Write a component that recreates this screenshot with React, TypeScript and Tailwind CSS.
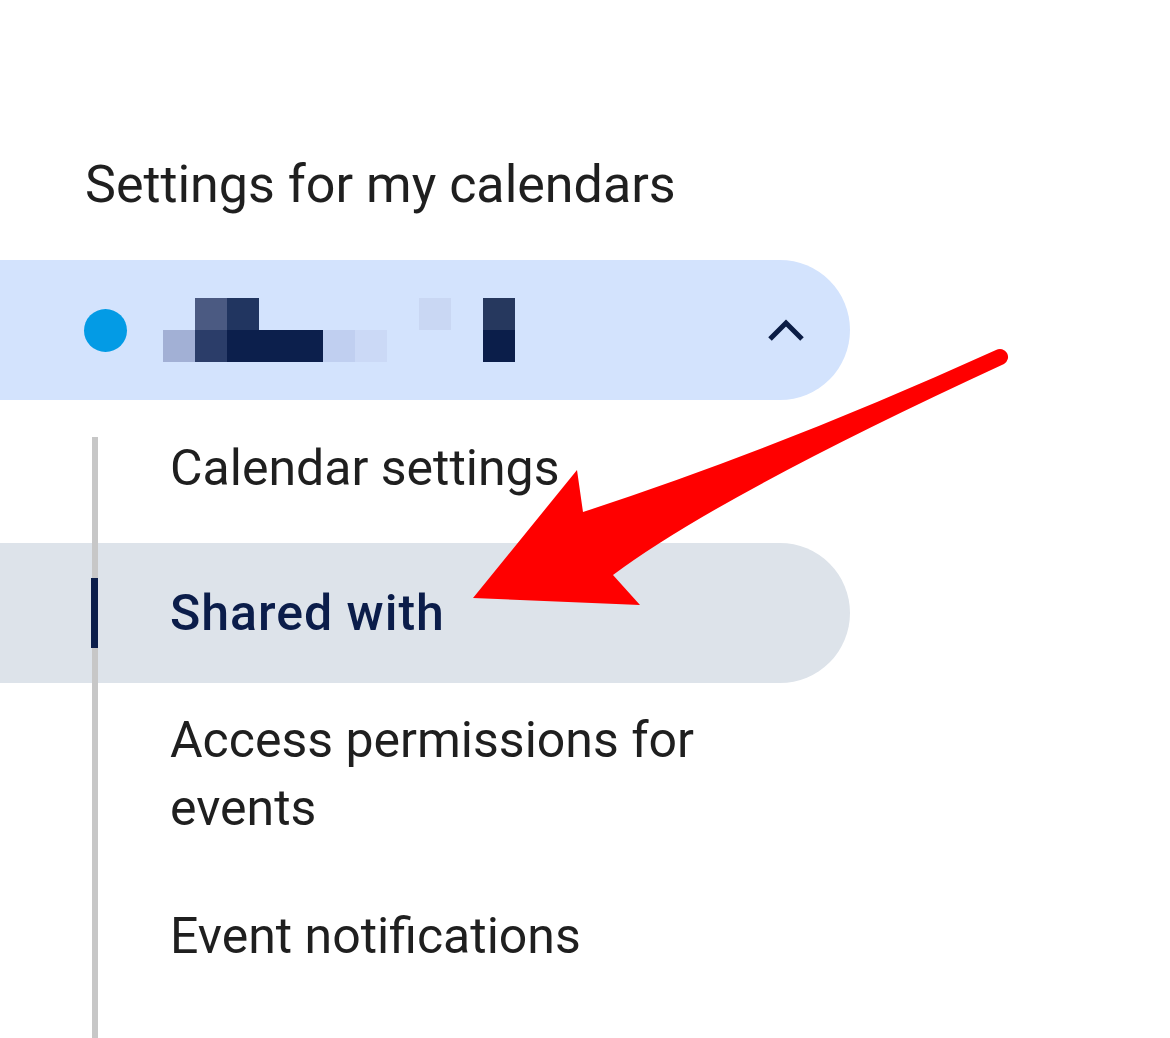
import React from "react";

// pixelated (redacted) calendar name, 2 rows x 11 cells
const nameCells: string[][] = [
  ["", "#4b5a82", "#213560", "", "", "", "", "", "#c9d7f3", "", "#26385e"],
  ["#a2b0d5", "#2b3d69", "#0c1f4c", "#0c1f4c", "#0c1f4c", "#c0cff0", "#cbd9f6", "", "", "", "#0b1e4a"],
];

const PixelName = () => {
  return (
    <div className="ml-[36px] flex flex-col">
      {nameCells.map((row, i) => (
        <div key={i} className="flex">
          {row.map((c, j) => (
            <div key={j} className="h-[32px] w-[32px]" style={{ backgroundColor: c || "transparent" }}></div>
          ))}
        </div>
      ))}
    </div>
  );
};

const Arrow = () => {
  return (
    <svg className="pointer-events-none absolute left-0 top-0" width="1170" height="1038" viewBox="0 0 1170 1038">
      <path
        d="M 996 350 Q 780 448 583 512 L 577 470 L 473 598 L 640 605 L 613 575 Q 720 495 1004 364 A 7 7 0 0 0 996 350 Z"
        fill="#ff0000"
      />
    </svg>
  );
};

export default function App() {
  return (
    <div className="relative h-[1038px] w-[1170px] overflow-hidden bg-white font-['Roboto',sans-serif] text-[#1f1f1f]">
      <h1 className="pl-[85px] pt-[154px] text-[52px] font-normal leading-[62px]">Settings for my calendars</h1>

      <div className="mt-[44px] flex h-[140px] w-[850px] items-center rounded-r-full bg-[#d3e3fd]">
        <div className="ml-[84px] h-[43px] w-[43px] rounded-full bg-[#039be5]"></div>
        <PixelName />
        <svg className="ml-auto mr-[44px]" width="40" height="26" viewBox="0 0 40 26">
          <path d="M4 22 L20 6 L36 22" fill="none" stroke="#0b1d45" strokeWidth="5" />
        </svg>
      </div>

      <div className="relative pb-[40px] text-[50px] leading-[68px]">
        <div className="absolute bottom-0 left-[92px] top-[37px] z-10 w-[6px] bg-[#c7c7c7]"></div>

        <div className="flex h-[143px] w-[850px] items-center pb-[7px] pl-[170px]">Calendar settings</div>

        <div className="relative flex h-[140px] w-[850px] items-center rounded-r-full bg-[#dde3ea] pl-[170px] font-medium tracking-[1px] text-[#0b1d4a]">
          <div className="absolute left-[91px] top-[35px] z-20 h-[70px] w-[7px] bg-[#0b1d4a]"></div>
          Shared with
        </div>

        <div className="w-[850px] pb-[24px] pl-[170px] pt-[23px]">
          Access permissions for
          <br />
          events
        </div>

        <div className="flex h-[140px] w-[850px] items-center pl-[170px]">Event notifications</div>
      </div>

      <Arrow />
    </div>
  );
}
